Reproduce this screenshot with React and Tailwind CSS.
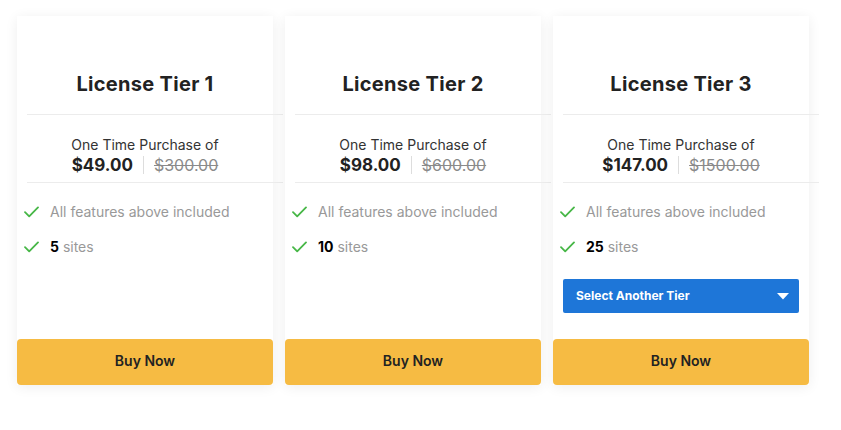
import React from "react";

const tiers = [
  { name: "License Tier 1", price: "$49.00", old: "$300.00", sites: "5" },
  { name: "License Tier 2", price: "$98.00", old: "$600.00", sites: "10" },
  { name: "License Tier 3", price: "$147.00", old: "$1500.00", sites: "25", select: true },
];

function Check() {
  return (
    <svg width="15" height="12" viewBox="0 0 15 12" className="shrink-0">
      <path d="M1 6.2 L5.2 10.4 L14 1.4" fill="none" stroke="#47b747" strokeWidth="1.8" strokeLinecap="round" strokeLinejoin="round" />
    </svg>
  );
}

function Card({ t }) {
  return (
    <div className="w-[256px] h-[369px] bg-white flex flex-col shadow-[0_2px_12px_rgba(0,0,0,0.07)]">
      <div className="pt-[54px] pb-[16px] text-center text-[20px] leading-[28px] font-bold tracking-[0.3px] text-[#222]">{t.name}</div>
      <div className="ml-[10px] w-full h-px bg-[#ececec]" />
      <div className="pt-[20px] pb-[7px] text-center">
        <div className="text-[14px] leading-[20px] text-[#333]">One Time Purchase of</div>
        <div className="flex items-center justify-center leading-[20px]">
          <span className="text-[17px] font-bold text-[#222]">{t.price}</span>
          <span className="mx-[10px] w-px h-[18px] bg-[#dddddd]" />
          <span className="text-[16px] text-[#8a8a8a] line-through">{t.old}</span>
        </div>
      </div>
      <div className="ml-[10px] w-full h-px bg-[#ececec]" />
      <div className="pt-[19px] pl-[7px] flex flex-col gap-[15px]">
        <div className="flex items-center gap-[11px] text-[14px] leading-[20px] text-[#999]">
          <Check />
          <span>All features above included</span>
        </div>
        <div className="flex items-center gap-[11px] text-[14px] leading-[20px] text-[#999]">
          <Check />
          <span><b className="text-black font-bold">{t.sites}</b> sites</span>
        </div>
      </div>
      {t.select && (
        <div className="mx-[10px] mt-[22px] h-[34px] bg-[#1e76d8] rounded-[2px] flex items-center justify-between pl-[13px] pr-[10px]">
          <span className="text-white text-[12px] font-bold">Select Another Tier</span>
          <svg width="12" height="7" viewBox="0 0 12 7"><path d="M0 0 L12 0 L6 6.5 Z" fill="#fff" /></svg>
        </div>
      )}
      <button className="mt-auto h-[46px] w-full bg-[#f6bb43] rounded-[4px] text-[14px] leading-[20px] pb-[2px] font-semibold text-[#222]">Buy Now</button>
    </div>
  );
}

export default function App() {
  return (
    <div className="w-[841px] h-[430px] bg-white pl-[17px] pt-[16px] flex gap-[12px] items-start" style={{ fontFamily: "Inter, 'Noto Sans', sans-serif" }}>
      {tiers.map((t) => (
        <Card key={t.name} t={t} />
      ))}
    </div>
  );
}
